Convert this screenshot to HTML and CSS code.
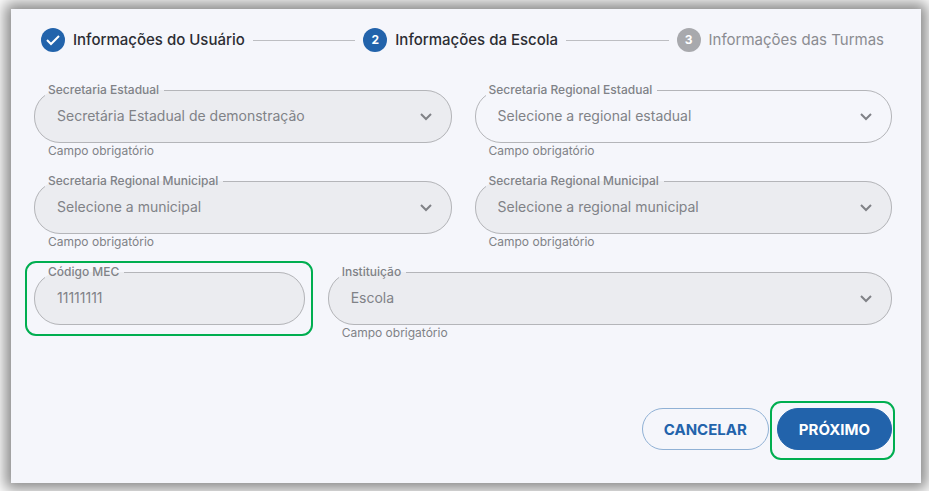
FILE: index.html
```html
<!DOCTYPE html>
<html lang="pt-BR">
  <head>
    <meta charset="UTF-8" />
    <meta name="viewport" content="width=device-width, initial-scale=1.0" />
    <title>Cadastro - Informações da Escola</title>
    <link rel="stylesheet" href="styles.css">
  </head>
  <body>
    <main class="panel">
      <ol class="stepper">
        <li class="step">
          <span class="step-icon">
            <svg width="24" height="24" viewBox="0 0 24 24" aria-hidden="true">
              <path d="M6 12l4 4 8-8" />
            </svg>
          </span>
          <span>Informações do Usuário</span>
        </li>
        <li class="step-line"></li>
        <li class="step" aria-current="step">
          <span class="step-icon">2</span>
          <span>Informações da Escola</span>
        </li>
        <li class="step-line"></li>
        <li class="step step-pending">
          <span class="step-icon">3</span>
          <span>Informações das Turmas</span>
        </li>
      </ol>

      <form class="form">
        <div class="fields">
          <div class="field">
            <fieldset class="outline filled">
              <legend><label for="estadual">Secretaria Estadual</label></legend>
              <select id="estadual" disabled>
                <option>Secretária Estadual de demonstração</option>
              </select>
              <svg class="arrow" viewBox="0 0 12 8" aria-hidden="true"><path d="M1 1l5 5 5-5" /></svg>
            </fieldset>
            <p class="hint">Campo obrigatório</p>
          </div>

          <div class="field">
            <fieldset class="outline">
              <legend><label for="regional-estadual">Secretaria Regional Estadual</label></legend>
              <select id="regional-estadual">
                <option>Selecione a regional estadual</option>
              </select>
              <svg class="arrow" viewBox="0 0 12 8" aria-hidden="true"><path d="M1 1l5 5 5-5" /></svg>
            </fieldset>
            <p class="hint">Campo obrigatório</p>
          </div>

          <div class="field">
            <fieldset class="outline filled">
              <legend><label for="municipal">Secretaria Regional Municipal</label></legend>
              <select id="municipal" disabled>
                <option>Selecione a municipal</option>
              </select>
              <svg class="arrow" viewBox="0 0 12 8" aria-hidden="true"><path d="M1 1l5 5 5-5" /></svg>
            </fieldset>
            <p class="hint">Campo obrigatório</p>
          </div>

          <div class="field">
            <fieldset class="outline filled">
              <legend><label for="regional-municipal">Secretaria Regional Municipal</label></legend>
              <select id="regional-municipal" disabled>
                <option>Selecione a regional municipal</option>
              </select>
              <svg class="arrow" viewBox="0 0 12 8" aria-hidden="true"><path d="M1 1l5 5 5-5" /></svg>
            </fieldset>
            <p class="hint">Campo obrigatório</p>
          </div>

          <div class="field field-small">
            <div class="highlight highlight-field">
              <fieldset class="outline filled">
                <legend><label for="mec">Código MEC</label></legend>
                <input type="text" id="mec" value="11111111" disabled />
              </fieldset>
            </div>
          </div>

          <div class="field field-large">
            <fieldset class="outline filled">
              <legend><label for="instituicao">Instituição</label></legend>
              <select id="instituicao" disabled>
                <option>Escola</option>
              </select>
              <svg class="arrow" viewBox="0 0 12 8" aria-hidden="true"><path d="M1 1l5 5 5-5" /></svg>
            </fieldset>
            <p class="hint">Campo obrigatório</p>
          </div>
        </div>

        <div class="actions">
          <button type="button" class="btn btn-outline">CANCELAR</button>
          <div class="highlight highlight-button">
            <button type="submit" class="btn btn-primary">PRÓXIMO</button>
          </div>
        </div>
      </form>
    </main>
  </body>
</html>
```
FILE: styles.css
```css
* {
  box-sizing: border-box;
}

body {
  margin: 0;
  padding: 9px 8px 8px 11px;
  min-height: 100vh;
  display: flex;
  background: #fff;
  font-family: Inter, "Liberation Sans", sans-serif;
  color: #808287;
}

.panel {
  flex: 1;
  display: flex;
  flex-direction: column;
  padding: 19px 29px 33px 23px;
  background: #f5f6fb;
  box-shadow: 0 0 14px 6px rgba(0, 0, 0, 0.47);
}

/* Etapas */
.stepper {
  display: flex;
  align-items: center;
  gap: 8px;
  margin: 0 8px 31px 7px;
  padding: 0;
  list-style: none;
  font-size: 15px;
  line-height: 24px;
}

.step {
  display: flex;
  align-items: center;
  gap: 8px;
  white-space: nowrap;
  color: #2c2d33;
  font-weight: 500;
}

.step-icon {
  width: 24px;
  height: 24px;
  border-radius: 50%;
  background: #2263ab;
  color: #fff;
  font-size: 12px;
  font-weight: 700;
  text-align: center;
}

.step-icon svg {
  display: block;
  fill: none;
  stroke: #fff;
  stroke-width: 2;
}

.step-line {
  flex: 1;
  height: 1px;
  background: #bdbec2;
}

.step-pending {
  color: #8b8c91;
  font-weight: 400;
}

.step-pending .step-icon {
  background: #a8a9ad;
}

/* Formulário */
.form {
  flex: 1;
  display: flex;
  flex-direction: column;
}

.fields {
  display: grid;
  grid-template-columns: repeat(12, 1fr);
  column-gap: 23px;
  row-gap: 15px;
}

.field {
  grid-column: span 6;
  min-width: 0;
}

.field-small {
  grid-column: span 4;
}

.field-large {
  grid-column: span 8;
}

.outline {
  position: relative;
  min-width: 0;
  margin: 0;
  padding: 0 0 8px;
  border: 1px solid #b4b5b9;
  border-radius: 26px;
}

.filled {
  background: #ebecf0;
}

.outline legend {
  margin-left: 10px;
  padding: 0 5px 0 3px;
  height: 14px;
  font-size: 12px;
  font-weight: 500;
  line-height: 14px;
}

.outline label {
  display: block;
}

.outline select,
.outline input {
  display: block;
  width: 100%;
  height: 37px;
  margin: 0;
  padding: 0 48px 0 22px;
  border: none;
  background: transparent;
  color: #808287;
  font-family: inherit;
  font-size: 14px;
  opacity: 1;
  appearance: none;
}

.arrow {
  position: absolute;
  right: 19px;
  bottom: 21px;
  width: 12px;
  height: 8px;
  fill: none;
  stroke: #808287;
  stroke-width: 2;
  pointer-events: none;
}

.hint {
  margin: 0 14px;
  font-size: 12px;
  line-height: 16px;
}

/* Botões */
.actions {
  display: flex;
  justify-content: flex-end;
  gap: 8px;
  margin-top: auto;
  padding-top: 24px;
}

.btn {
  height: 42px;
  padding: 0 21px;
  border: 1px solid #2263ab;
  border-radius: 21px;
  font-family: inherit;
  font-size: 15px;
  font-weight: 700;
  cursor: pointer;
}

.btn-outline {
  border-color: #90b1d5;
  background: transparent;
  color: #2263ab;
}

.btn-primary {
  background: #2263ab;
  color: #fff;
}

/* Destaques verdes */
.highlight {
  position: relative;
}

.highlight::after {
  content: "";
  position: absolute;
  border: 2px solid #00ae50;
  border-radius: 11px;
  pointer-events: none;
}

.highlight-field::after {
  inset: -4px -8px -11px -9px;
}

.highlight-button::after {
  inset: -7px -3px -10px -7px;
}
```
